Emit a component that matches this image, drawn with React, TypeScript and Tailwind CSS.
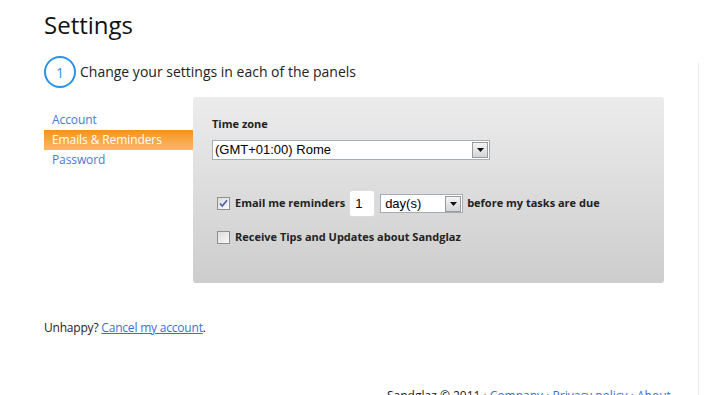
import { useState } from 'react';

const sans = "font-['Open_Sans','Noto_Sans',sans-serif]";
const arial = "font-['Liberation_Sans',Arial,sans-serif]";

const Arrow = () => (
  <span className="flex h-[16px] w-[16px] items-center justify-center border border-[#9a9a9a] bg-gradient-to-b from-[#f4f4f4] to-[#d6d6d6]">
    <svg width="7" height="4" viewBox="0 0 7 4">
      <path d="M0 0h7L3.5 4z" fill="#111" />
    </svg>
  </span>
);

const Checkbox = ({ checked, onToggle }: { checked: boolean; onToggle: () => void }) => (
  <span
    onClick={onToggle}
    className="flex h-[13px] w-[13px] shrink-0 items-center justify-center border border-[#8f8f8f] bg-gradient-to-br from-[#dcdcdc] to-[#fafafa]"
  >
    {checked && (
      <svg width="9" height="9" viewBox="0 0 9 9">
        <path d="M1 4.5l2.3 2.6L8 1.2" stroke="#4a5fa8" strokeWidth="1.6" fill="none" />
      </svg>
    )}
  </span>
);

const App = () => {
  const [remind, setRemind] = useState(true);
  const [tips, setTips] = useState(false);

  return (
    <div className={`flex min-h-[395px] bg-white text-[#222] ${sans}`}>
      <div className="w-[698px] pl-[44px]">
        <h1 className="mt-[7px] text-[24px] leading-[36px] text-[#111]">Settings</h1>

        <div className="mt-[13px] flex items-center gap-[4px]">
          <span className="flex h-[32px] w-[32px] items-center justify-center rounded-full border-2 border-[#2a93e8] text-[14px] text-[#2a93e8]">
            1
          </span>
          <span className="text-[14px] leading-[20px] text-[#222]">Change your settings in each of the panels</span>
        </div>

        <div className="mt-[9px] flex">
          <nav className="w-[149px] pt-[13px] text-[12px] leading-[20px] tracking-[-0.1px]">
            <a href="#" className="block pl-[8px] text-[#4a78d6]">Account</a>
            <a href="#" className="block bg-gradient-to-b from-[#f39408] to-[#fcb866] pl-[8px] text-white">
              Emails &amp; Reminders
            </a>
            <a href="#" className="block pl-[8px] text-[#4a78d6]">Password</a>
          </nav>

          <section className="h-[186px] w-[471px] rounded-[3px] bg-gradient-to-b from-[#ececec] to-[#cdcdcd] pl-[19px] pt-[18px]">
            <label className="block text-[11px] font-bold leading-[18px] text-[#222]">Time zone</label>
            <div className="mt-[7px] flex h-[20px] w-[278px] items-center justify-between border border-[#a5acb2] bg-white pr-[1px]">
              <span className={`pl-[2px] text-[13px] text-black ${arial}`}>(GMT+01:00) Rome</span>
              <Arrow />
            </div>

            <div className="mt-[30px] flex h-[27px] items-center pl-[5px] text-[11px] font-bold">
              <Checkbox checked={remind} onToggle={() => setRemind(!remind)} />
              <span className="ml-[5px]">Email me reminders</span>
              <span className={`ml-[4px] flex h-[27px] w-[26px] items-center rounded-[3px] border border-[#dcdcdc] bg-white pl-[5px] text-[13px] font-normal text-black ${arial}`}>
                1
              </span>
              <div className="ml-[5px] flex h-[19px] w-[83px] items-center justify-between border border-[#a5acb2] bg-white pr-[1px]">
                <span className={`pl-[4px] text-[13px] font-normal text-black ${arial}`}>day(s)</span>
                <Arrow />
              </div>
              <span className="ml-[4px]">before my tasks are due</span>
            </div>

            <div className="mt-[11px] flex h-[18px] items-center pl-[5px] text-[11px] font-bold">
              <Checkbox checked={tips} onToggle={() => setTips(!tips)} />
              <span className="ml-[5px]">Receive Tips and Updates about Sandglaz</span>
            </div>
          </section>
        </div>

        <p className="mt-[36px] text-[12px] leading-[18px] tracking-[-0.2px] text-[#222]">
          Unhappy? <a href="#" className="text-[#3b6fd6] underline">Cancel my account</a>.
        </p>

        <footer className="mt-[50px] pl-[343px] text-[12px] leading-[18px] text-[#222]">
          Sandglaz © 2011 · <a href="#" className="text-[#3b6fd6]">Company</a> ·{' '}
          <a href="#" className="text-[#3b6fd6]">Privacy policy</a> · <a href="#" className="text-[#3b6fd6]">About</a>
        </footer>
      </div>
      <div className="mt-[63px] h-[332px] border-l border-[#ebebeb]" />
    </div>
  );
};

export default App;
